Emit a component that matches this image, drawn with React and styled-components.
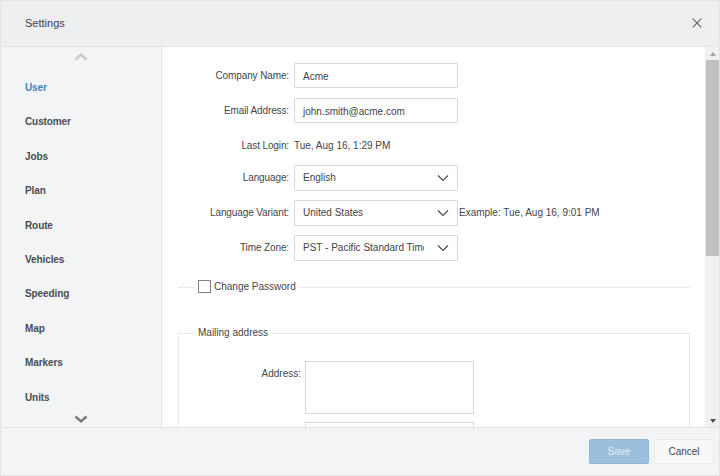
import React from "react";
import styled, { createGlobalStyle } from "styled-components";

const menu = [
  "User",
  "Customer",
  "Jobs",
  "Plan",
  "Route",
  "Vehicles",
  "Speeding",
  "Map",
  "Markers",
  "Units"
];

function Chevron({ up, color }) {
  return (
    <svg width="14" height="9" viewBox="0 0 14 9">
      <path
        d={up ? "M1.5 7.5L7 2.5l5.5 5" : "M1.5 1.5L7 6.5l5.5-5"}
        fill="none"
        stroke={color}
        strokeWidth="2.4"
      />
    </svg>
  );
}

function SelectBox({ value }) {
  return (
    <Select>
      <SelectValue>{value}</SelectValue>
      <svg width="12" height="8" viewBox="0 0 12 8">
        <path d="M1 1.5l5 5 5-5" fill="none" stroke="#4a4d52" strokeWidth="1.2" />
      </svg>
    </Select>
  );
}

export default function App() {
  return (
    <>
      <Global />
      <Dialog>
        <Header>
          <Title>Settings</Title>
          <svg width="10" height="10" viewBox="0 0 10 10">
            <path d="M.7.7l8.6 8.6M9.3.7L.7 9.3" stroke="#5a5d62" strokeWidth="1.1" />
          </svg>
        </Header>
        <Body>
          <Sidebar>
            <TopArrow>
              <Chevron up color="#c8cacc" />
            </TopArrow>
            <Menu>
              {menu.map((m, i) => (
                <MenuItem key={m} $active={i === 0}>
                  {m}
                </MenuItem>
              ))}
            </Menu>
            <BottomArrow>
              <Chevron color="#76797d" />
            </BottomArrow>
          </Sidebar>
          <Content>
            <Row>
              <Label>Company Name:</Label>
              <Input>Acme</Input>
            </Row>
            <Row>
              <Label>Email Address:</Label>
              <Input>john.smith@acme.com</Input>
            </Row>
            <Row $text>
              <Label>Last Login:</Label>
              <Plain>Tue, Aug 16, 1:29 PM</Plain>
            </Row>
            <Row>
              <Label>Language:</Label>
              <SelectBox value="English" />
            </Row>
            <Row>
              <Label>Language Variant:</Label>
              <SelectBox value="United States" />
              <Example>Example: Tue, Aug 16, 9:01 PM</Example>
            </Row>
            <Row>
              <Label>Time Zone:</Label>
              <SelectBox value="PST - Pacific Standard Time" />
            </Row>
            <PasswordSet>
              <PasswordLegend>
                <Check />
                Change Password
              </PasswordLegend>
            </PasswordSet>
            <MailSet>
              <MailLegend>Mailing address</MailLegend>
              <AddressRow>
                <AddressLabel>Address:</AddressLabel>
                <TextArea />
              </AddressRow>
              <AddressRow>
                <AddressLabel />
                <SecondInput />
              </AddressRow>
            </MailSet>
          </Content>
          <Scrollbar>
            <ScrollBtn>
              <Triangle $up />
            </ScrollBtn>
            <Track>
              <Thumb />
            </Track>
            <ScrollBtn>
              <Triangle />
            </ScrollBtn>
          </Scrollbar>
        </Body>
        <Footer>
          <SaveButton>Save</SaveButton>
          <CancelButton>Cancel</CancelButton>
        </Footer>
      </Dialog>
    </>
  );
}

const Global = createGlobalStyle`
  html, body {
    margin: 0;
    padding: 0;
    background: #fff;
  }
  body {
    font-family: "Liberation Sans", Arial, sans-serif;
    font-size: 10px;
    color: #43464b;
  }
`;

const Dialog = styled.div`
  width: 720px;
  height: 476px;
  box-sizing: border-box;
  border: 1px solid #e3e4e7;
  display: flex;
  flex-direction: column;
  overflow: hidden;
`;

const Header = styled.div`
  flex: 0 0 46px;
  box-sizing: border-box;
  display: flex;
  align-items: center;
  justify-content: space-between;
  padding: 0 17px 1px 24px;
  background: #eeeff1;
  border-bottom: 1px solid #e3e4e7;
`;

const Title = styled.div`
  font-size: 11px;
  color: #3c3f44;
`;

const Body = styled.div`
  flex: 1;
  min-height: 0;
  display: flex;
`;

const Sidebar = styled.div`
  flex: 0 0 160px;
  display: flex;
  flex-direction: column;
  background: #f3f4f6;
  border-right: 1px solid #e6e7ea;
`;

const TopArrow = styled.div`
  height: 21px;
  box-sizing: border-box;
  padding-top: 5px;
  display: flex;
  align-items: center;
  justify-content: center;
`;

const BottomArrow = styled(TopArrow)`
  padding-top: 0;
  padding-bottom: 2px;
`;

const Menu = styled.div`
  flex: 1;
  padding-top: 10px;
`;

const MenuItem = styled.div`
  height: 34.4px;
  line-height: 34.4px;
  padding-left: 24px;
  font-weight: bold;
  letter-spacing: -0.1px;
  color: ${p => (p.$active ? "#3f86c9" : "#4a4d52")};
`;

const Content = styled.div`
  flex: 1;
  min-width: 0;
  overflow: hidden;
  padding: 16px 15px 0 16px;
  background: #fff;
  border-right: 1px solid #eceef0;
`;

const Row = styled.div`
  display: flex;
  align-items: center;
  height: 25px;
  margin-bottom: 10px;
  ${p => p.$text && "margin-top: 11px; margin-bottom: 9px; height: 22px;"}
`;

const Label = styled.div`
  flex: 0 0 111px;
  margin-right: 5px;
  text-align: right;
  white-space: nowrap;
  letter-spacing: -0.12px;
`;

const Input = styled.div`
  width: 164px;
  height: 25px;
  box-sizing: border-box;
  border: 1px solid #d8d9de;
  padding: 1px 0 0 8px;
  line-height: 24px;
  color: #3f4247;
  border-radius: 1px;
`;

const Plain = styled.div`
  color: #43464b;
`;

const Select = styled(Input)`
  display: flex;
  align-items: center;
  justify-content: space-between;
  padding-right: 8px;
  height: 26px;
`;

const SelectValue = styled.div`
  width: 121px;
  overflow: hidden;
  white-space: nowrap;
`;

const Example = styled.div`
  margin-left: 1px;
`;

const PasswordSet = styled.fieldset`
  margin: 19px 0 0;
  padding: 0 0 0 15px;
  border: 0;
  border-top: 1px solid #e8e9eb;
  height: 26px;
`;

const PasswordLegend = styled.legend`
  display: flex;
  align-items: center;
  padding: 0 3px 2px 4px;
  margin-left: 1px;
  height: 14px;
`;

const Check = styled.span`
  display: inline-block;
  width: 13px;
  height: 13px;
  box-sizing: border-box;
  border: 1px solid #8f7f88;
  margin-right: 3px;
  background: #fff;
`;

const MailSet = styled.fieldset`
  margin: 20px 0 0;
  padding: 20px 0 0;
  border: 1px solid #e8e9eb;
  border-bottom: 0;
`;

const MailLegend = styled.legend`
  margin-left: 15px;
  padding: 0 4px 2px;
  line-height: 13px;
`;

const AddressRow = styled.div`
  display: flex;
  align-items: flex-start;
  margin-bottom: 8px;
`;

const AddressLabel = styled.div`
  flex: 0 0 122px;
  margin-right: 4px;
  padding-top: 7px;
  text-align: right;
`;

const TextArea = styled.div`
  width: 169px;
  height: 53px;
  box-sizing: border-box;
  border: 1px solid #d8d9de;
`;

const SecondInput = styled(TextArea)`
  height: 25px;
`;

const Scrollbar = styled.div`
  flex: 0 0 13px;
  display: flex;
  flex-direction: column;
  background: #f1f1f1;
`;

const ScrollBtn = styled.div`
  height: 13px;
  display: flex;
  align-items: center;
  justify-content: center;
`;

const Triangle = styled.div`
  width: 0;
  height: 0;
  border-left: 3.5px solid transparent;
  border-right: 3.5px solid transparent;
  ${p =>
    p.$up
      ? "border-bottom: 4px solid #a3a3a3;"
      : "border-top: 4px solid #505050;"}
`;

const Track = styled.div`
  flex: 1;
`;

const Thumb = styled.div`
  height: 196px;
  background: #c1c1c1;
`;

const Footer = styled.div`
  flex: 0 0 47px;
  display: flex;
  align-items: center;
  justify-content: flex-end;
  gap: 5px;
  padding: 0 5px 0 0;
  background: #f3f4f6;
  border-top: 1px solid #e3e4e7;
`;

const SaveButton = styled.div`
  width: 60px;
  height: 25px;
  box-sizing: border-box;
  line-height: 24px;
  text-align: center;
  color: #e4edf5;
  background: #9bbfdd;
  border: 1px solid #8fb7d8;
  border-radius: 2px;
`;

const CancelButton = styled(SaveButton)`
  color: #43464b;
  background: #f8f8f9;
  border-color: #e9eaec;
`;
